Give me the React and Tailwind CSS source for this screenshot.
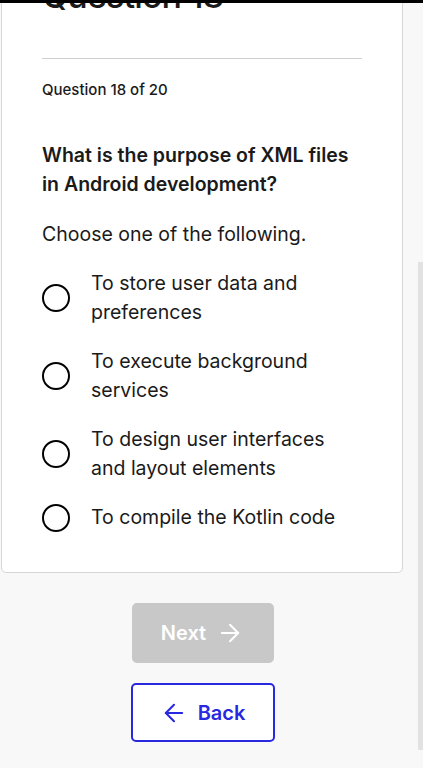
import React from 'react';
import { ArrowRight, ArrowLeft } from 'lucide-react';

const options = [
    'To store user data and preferences',
    'To execute background services',
    'To design user interfaces and layout elements',
    'To compile the Kotlin code',
];

const App = () => {
    return (
        <div className="relative min-h-screen overflow-hidden bg-[#f8f8f8] font-['Inter','Liberation_Sans',sans-serif] text-[#1a1a1a]">
            {/* top edge of the header */}
            <div className="absolute top-0 left-0 right-0 z-10 h-[3px] bg-black" />

            <div className="flex">
                <main className="w-[404px] shrink-0 pl-[1px]">
                    {/* Question card */}
                    <div className="-mt-[25px] w-[402px] rounded-b-[5px] border border-[#d6d6d6] bg-white px-10 pb-[40px]">
                        <h2 className="text-[34px] font-medium leading-[40px] tracking-tight">Question 18</h2>
                        <div className="mt-[42px] h-px bg-[#cfcfcf]" />
                        <p className="mt-[20px] text-[15px] font-medium leading-[22px]">Question 18 of 20</p>
                        <h3 className="mt-10 text-[19.5px] font-semibold leading-[29px]">
                            What is the purpose of XML files in Android development?
                        </h3>
                        <p className="mt-[21px] text-[19.5px] leading-[29px]">Choose one of the following.</p>

                        <div className="mt-5 flex flex-col gap-5">
                            {options.map((opt) => (
                                <label key={opt} className="flex items-center gap-[21px]">
                                    <span className="h-[28px] w-[28px] shrink-0 rounded-full border-[2.5px] border-black" />
                                    <span className="text-[19.5px] leading-[29px]">{opt}</span>
                                </label>
                            ))}
                        </div>
                    </div>

                    {/* Navigation */}
                    <div className="mt-[30px] flex flex-col items-center gap-[20px]">
                        <button className="flex h-[60px] w-[142px] items-center justify-center gap-[10px] rounded-[5px] bg-[#c8c8c8] text-[20px] font-semibold text-white">
                            Next
                            <ArrowRight className="h-[28px] w-[28px]" strokeWidth={1.75} />
                        </button>
                        <button className="flex h-[59px] w-[144px] items-center justify-center gap-[10px] rounded-[5px] border-2 border-[#2828e0] bg-white text-[20px] font-semibold text-[#2828e0]">
                            <ArrowLeft className="h-[28px] w-[28px]" strokeWidth={1.75} />
                            Back
                        </button>
                    </div>
                </main>

                {/* side panel edge */}
                <aside className="ml-[14px] mt-[262px] h-[488px] w-[20px] shrink-0 bg-[#e2e2e2]" />
            </div>
        </div>
    );
};

export default App;
